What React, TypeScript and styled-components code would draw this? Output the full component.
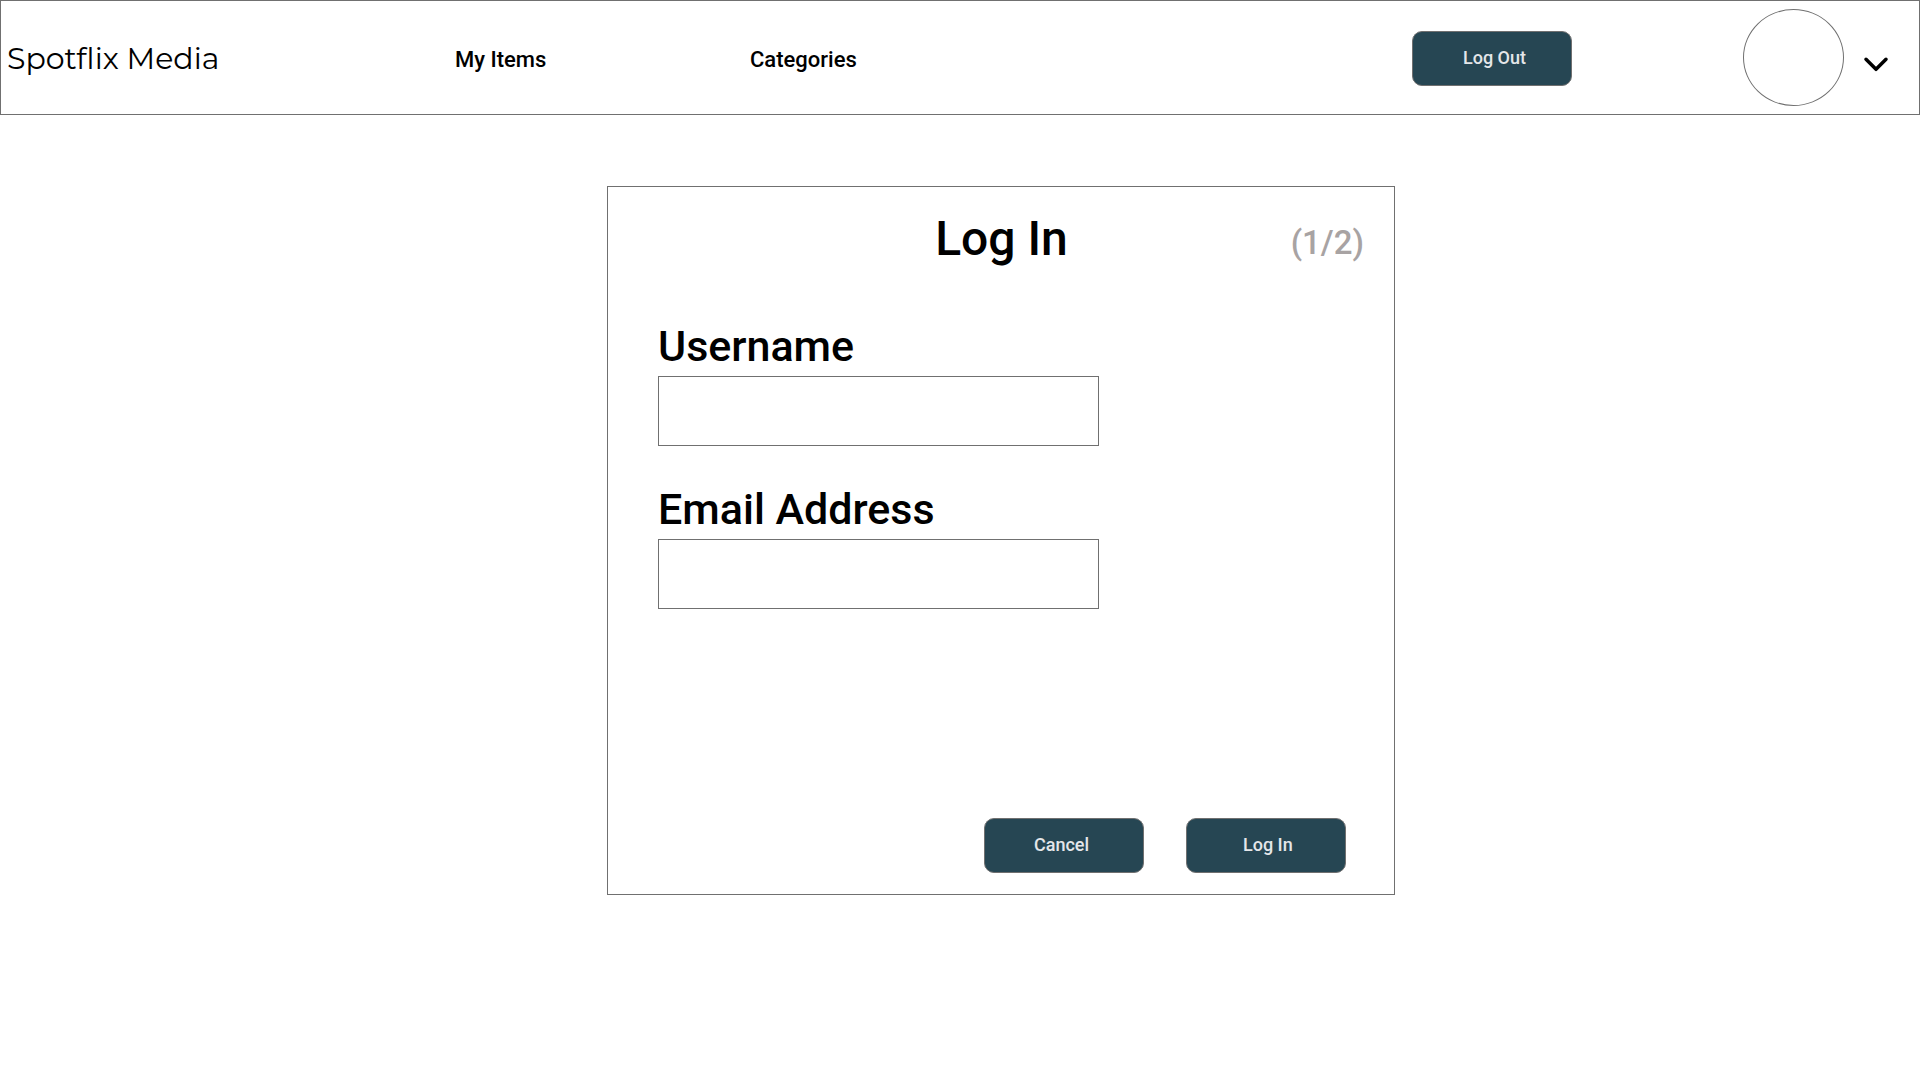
import React from "react";
import styled, { createGlobalStyle } from "styled-components";

const GlobalStyle = createGlobalStyle`
  *, *::before, *::after { box-sizing: border-box; }
  body {
    margin: 0;
    background: #fff;
    color: #000;
    font-family: Roboto, "Liberation Sans", sans-serif;
    font-weight: 500;
  }
`;

const Page = styled.div`
  width: 1920px;
  height: 1080px;
  overflow: hidden;
  background: #fff;
`;

const Header = styled.header`
  display: flex;
  align-items: center;
  width: 100%;
  height: 115px;
  border: 1px solid #707070;
`;

const Brand = styled.div`
  width: 454px;
  padding: 3px 0 0 6px;
  font-family: Montserrat, Inter, sans-serif;
  font-size: 30px;
  font-weight: 400;
  line-height: 38px;
  white-space: nowrap;
`;

const Nav = styled.nav`
  display: flex;
  flex: 1;
  padding-top: 4px;
`;

const NavLink = styled.a<{ $width: number }>`
  width: ${(p) => p.$width}px;
  font-size: 22px;
  line-height: 28px;
`;

const Button = styled.button<{ $indent: number }>`
  width: 160px;
  height: 55px;
  padding: 0 0 2px ${(p) => p.$indent}px;
  border: 1px solid #707070;
  border-radius: 10px;
  background: #264653;
  color: #e4e6e9;
  font: inherit;
  font-size: 18px;
  line-height: 24px;
  text-align: left;
`;

const LogOutButton = styled(Button)`
  margin-top: 2px;
`;

const Account = styled.div`
  display: flex;
  align-items: center;
  width: 176px;
  margin-left: 171px;
`;

const Avatar = styled.div`
  width: 101px;
  height: 97px;
  border: 1px solid #707070;
  border-radius: 50%;
`;

const Chevron = styled.svg`
  width: 26px;
  height: 16px;
  margin: 13px 0 0 19px;
`;

const Card = styled.form`
  display: flex;
  flex-direction: column;
  width: 788px;
  height: 709px;
  margin: 71px 0 0 607px;
  border: 1px solid #707070;
`;

const CardHead = styled.div`
  display: grid;
  grid-template-columns: 1fr auto 1fr;
  height: 133px;
  padding: 24px 30px 0 31px;
`;

const Title = styled.h1`
  grid-column: 2;
  margin: 0;
  font-size: 48px;
  font-weight: 500;
  line-height: 56px;
`;

const Step = styled.span`
  justify-self: end;
  padding-top: 12px;
  color: #a8a3a3;
  font-size: 33px;
  line-height: 40px;
`;

const Fields = styled.div`
  display: flex;
  flex: 1;
  flex-direction: column;
  gap: 37px;
  padding-left: 50px;
`;

const Field = styled.label`
  display: flex;
  flex-direction: column;
  gap: 4px;
  font-size: 43px;
  line-height: 52px;
`;

const Input = styled.input`
  width: 441px;
  height: 70px;
  padding: 0 16px;
  border: 1px solid #707070;
  background: #fff;
  font: inherit;
  font-size: 28px;
  outline: none;
`;

const Actions = styled.div`
  display: flex;
  justify-content: flex-end;
  gap: 42px;
  padding: 0 48px 21px 0;
`;

export default function App() {
  return (
    <Page>
      <GlobalStyle />
      <Header>
        <Brand>Spotflix Media</Brand>
        <Nav>
          <NavLink $width={295}>My Items</NavLink>
          <NavLink $width={120}>Categories</NavLink>
        </Nav>
        <LogOutButton type="button" $indent={50}>Log Out</LogOutButton>
        <Account>
          <Avatar />
          <Chevron viewBox="0 0 26 16" aria-hidden="true">
            <path
              d="M3 3.3 13 13.3 23 3.3"
              fill="none"
              stroke="#000"
              strokeWidth="3.5"
              strokeLinecap="round"
              strokeLinejoin="round"
            />
          </Chevron>
        </Account>
      </Header>
      <Card>
        <CardHead>
          <Title>Log In</Title>
          <Step>(1/2)</Step>
        </CardHead>
        <Fields>
          <Field>
            Username
            <Input type="text" />
          </Field>
          <Field>
            Email Address
            <Input type="email" />
          </Field>
        </Fields>
        <Actions>
          <Button type="button" $indent={49}>Cancel</Button>
          <Button type="button" $indent={56}>Log In</Button>
        </Actions>
      </Card>
    </Page>
  );
}
